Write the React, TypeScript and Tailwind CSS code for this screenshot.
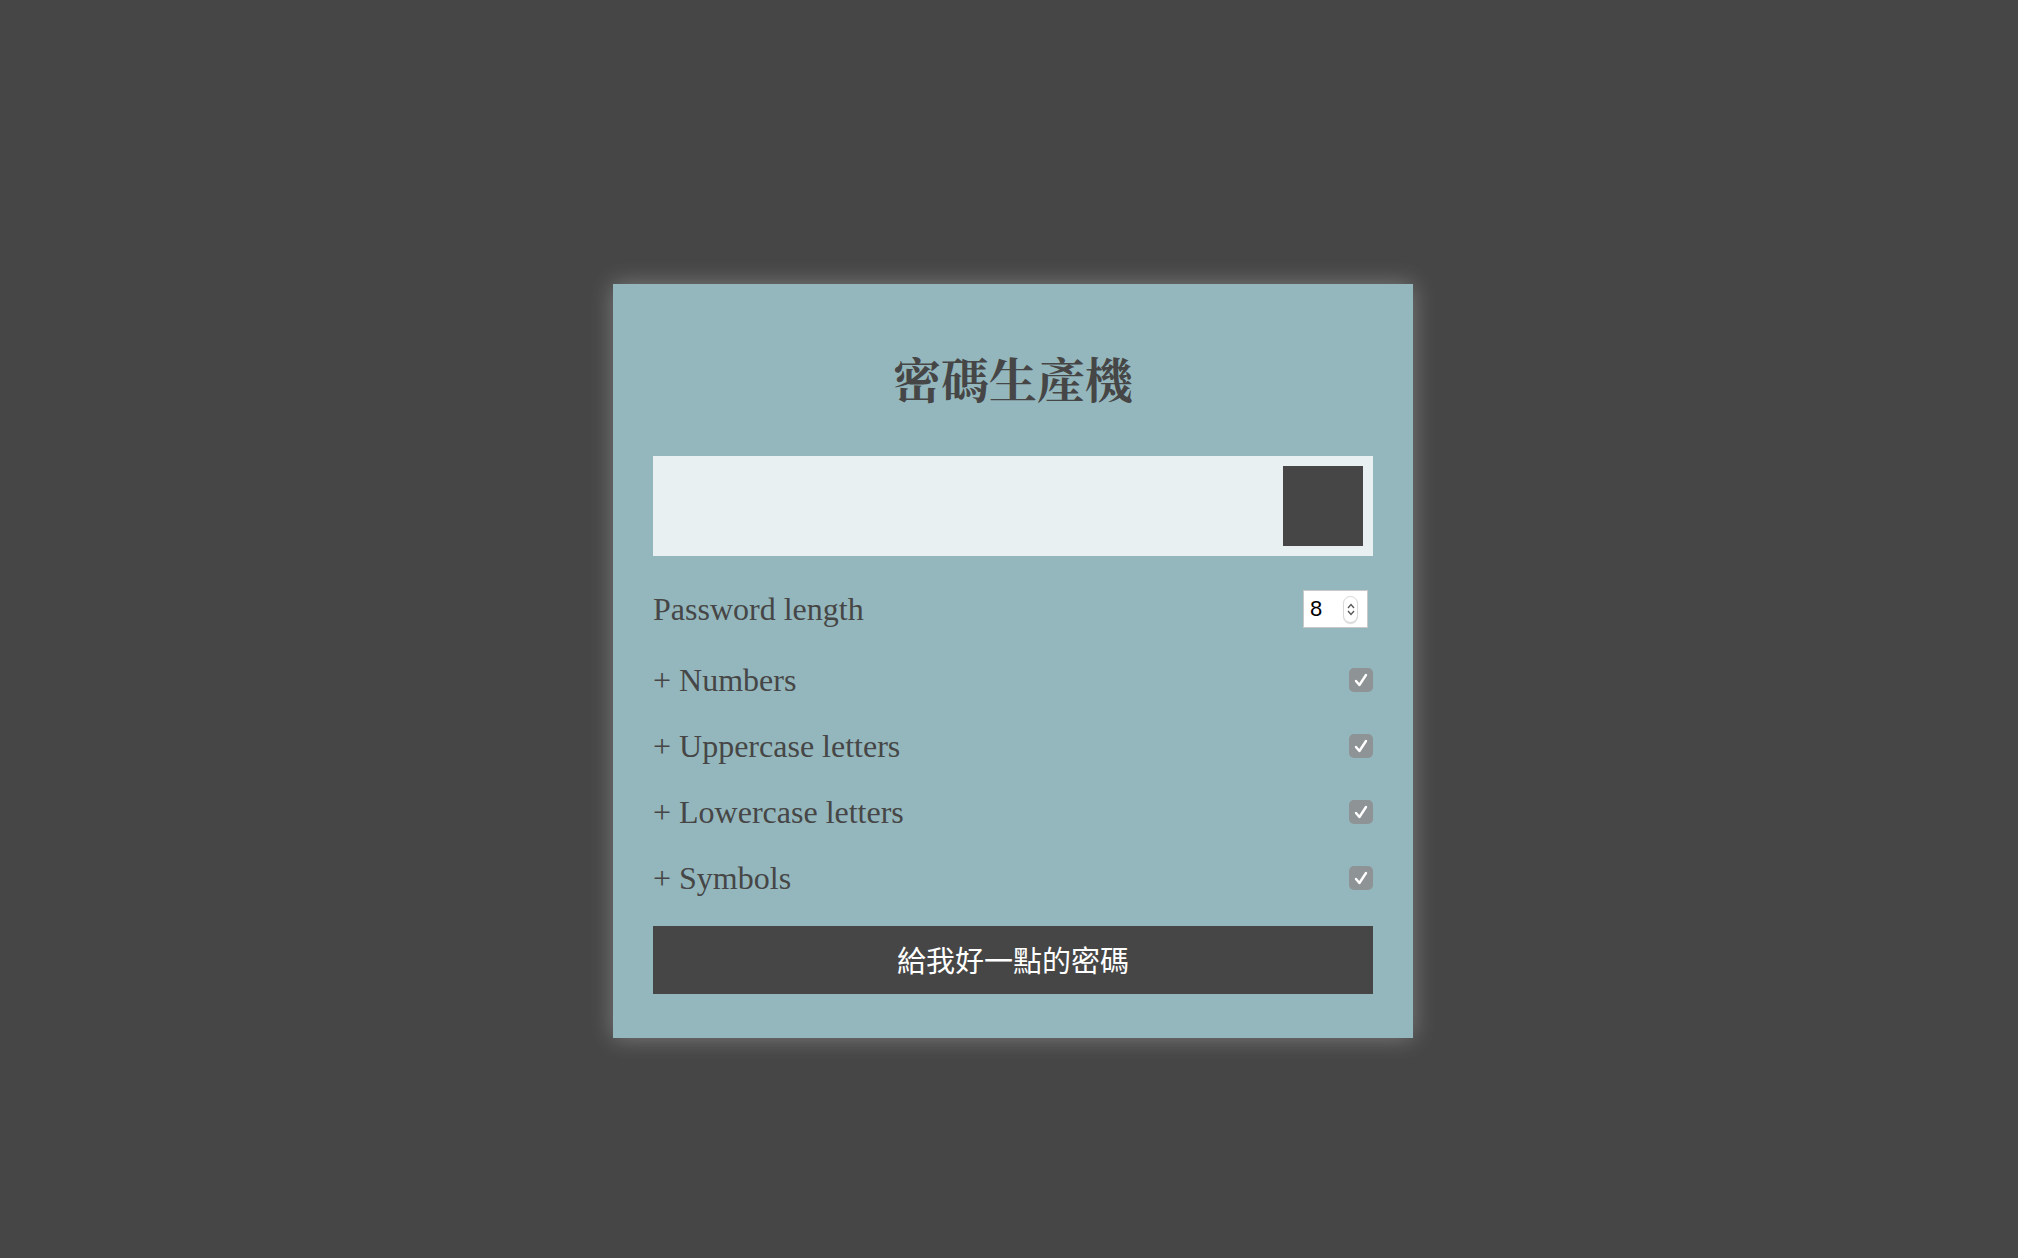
import React from "react";

const serif = { fontFamily: '"Liberation Serif", "Noto Serif CJK TC", "Noto Sans CJK TC", serif' };

function Check() {
  return (
    <div className="flex h-[24px] w-[24px] items-center justify-center rounded-[5px] bg-[#8e9396]">
      <svg width="18" height="18" viewBox="0 0 18 18">
        <path d="M4 10 L7.4 14 L14 4" fill="none" stroke="#ffffff" strokeWidth="2.4" strokeLinecap="round" strokeLinejoin="round" />
      </svg>
    </div>
  );
}

function Row({ label }: { label: string }) {
  return (
    <div className="flex h-[66px] items-center justify-between">
      <span className="text-[32px] leading-normal text-[#464646]" style={serif}>
        {label}
      </span>
      <Check />
    </div>
  );
}

export default function App() {
  return (
    <div className="flex min-h-[1258px] w-full justify-center bg-[#464646] pl-[8px] pt-[284px]">
      <div className="flex h-[754px] w-[800px] flex-col bg-[#94b7bd] px-[40px] pt-[70px] shadow-[0_0_22px_rgba(255,255,255,0.3)]">
        <h1
          className="text-center text-[48px] font-bold leading-[48px] text-[#464646]"
          style={{ fontFamily: '"Noto Serif CJK TC", "Liberation Serif", "Noto Sans CJK TC", serif' }}
        >
          密碼生產機
        </h1>
        <div className="mt-[54px] flex h-[100px] items-start justify-end bg-[#e8f0f2] pr-[10px] pt-[10px]">
          <div className="h-[80px] w-[80px] bg-[#464646]" />
        </div>
        <div className="mt-[20px] flex h-[66px] items-center justify-between">
          <span className="text-[32px] leading-normal text-[#464646]" style={serif}>
            Password length
          </span>
          <div className="mr-[5px] flex h-[38px] w-[65px] items-center justify-between border border-[#c9c9c9] bg-white pl-[6px] pr-[9px]">
            <span
              className="text-[22px] leading-none text-black"
              style={{ fontFamily: '"Liberation Sans", Arial, sans-serif' }}
            >
              8
            </span>
            <div className="flex h-[27px] w-[15px] flex-col items-center justify-center gap-[1px] rounded-full border border-[#d8d8d8] bg-white shadow-[0_1px_1px_rgba(0,0,0,0.15)]">
              <svg width="8" height="6" viewBox="0 0 8 6">
                <path d="M1 5 L4 1.5 L7 5" fill="none" stroke="#555" strokeWidth="1.3" />
              </svg>
              <svg width="8" height="6" viewBox="0 0 8 6">
                <path d="M1 1 L4 4.5 L7 1" fill="none" stroke="#555" strokeWidth="1.3" />
              </svg>
            </div>
          </div>
        </div>
        <div className="mt-[5px] flex flex-col">
          <Row label="+ Numbers" />
          <Row label="+ Uppercase letters" />
          <Row label="+ Lowercase letters" />
          <Row label="+ Symbols" />
        </div>
        <button
          className="mt-[15px] flex h-[68px] w-full items-center justify-center bg-[#464646] text-[29px] font-normal text-white"
          style={{ fontFamily: '"Noto Sans CJK TC", "Liberation Sans", sans-serif' }}
        >
          給我好一點的密碼
        </button>
      </div>
    </div>
  );
}
